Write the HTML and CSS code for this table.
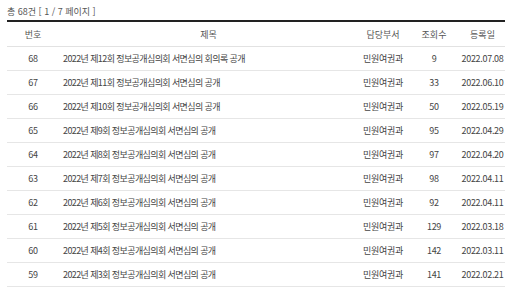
FILE: index.html
```html
<!DOCTYPE html>
<html lang="ko">
<head>
<meta charset="utf-8">
<link rel="stylesheet" href="styles.css">
</head>
<body>
<div class="board">
  <div class="count">총 68건 [ 1 / 7 페이지 ]</div>
  <table class="list">
    <colgroup>
      <col class="c-num"><col class="c-title"><col class="c-dept"><col class="c-hit"><col class="c-date">
    </colgroup>
    <thead>
      <tr><th>번호</th><th>제목</th><th>담당부서</th><th>조회수</th><th>등록일</th></tr>
    </thead>
    <tbody>
      <tr><td>68</td><td class="title">2022년 제12회 정보공개심의회 서면심의 회의록 공개</td><td>민원여권과</td><td>9</td><td>2022.07.08</td></tr>
      <tr><td>67</td><td class="title">2022년 제11회 정보공개심의회 서면심의 공개</td><td>민원여권과</td><td>33</td><td>2022.06.10</td></tr>
      <tr><td>66</td><td class="title">2022년 제10회 정보공개심의회 서면심의 공개</td><td>민원여권과</td><td>50</td><td>2022.05.19</td></tr>
      <tr><td>65</td><td class="title">2022년 제9회 정보공개심의회 서면심의 공개</td><td>민원여권과</td><td>95</td><td>2022.04.29</td></tr>
      <tr><td>64</td><td class="title">2022년 제8회 정보공개심의회 서면심의 공개</td><td>민원여권과</td><td>97</td><td>2022.04.20</td></tr>
      <tr><td>63</td><td class="title">2022년 제7회 정보공개심의회 서면심의 공개</td><td>민원여권과</td><td>98</td><td>2022.04.11</td></tr>
      <tr><td>62</td><td class="title">2022년 제6회 정보공개심의회 서면심의 공개</td><td>민원여권과</td><td>92</td><td>2022.04.11</td></tr>
      <tr><td>61</td><td class="title">2022년 제5회 정보공개심의회 서면심의 공개</td><td>민원여권과</td><td>129</td><td>2022.03.18</td></tr>
      <tr><td>60</td><td class="title">2022년 제4회 정보공개심의회 서면심의 공개</td><td>민원여권과</td><td>142</td><td>2022.03.11</td></tr>
      <tr><td>59</td><td class="title">2022년 제3회 정보공개심의회 서면심의 공개</td><td>민원여권과</td><td>141</td><td>2022.02.21</td></tr>
    </tbody>
  </table>
</div>
</body>
</html>
```
FILE: styles.css
```css
html, body {
  margin: 0;
  padding: 0;
  background: #fff;
}
body {
  font-family: "Noto Sans CJK KR", "Noto Sans", sans-serif;
  font-size: 9px;
  color: #444;
}
.board {
  padding: 0 7px;
}
.count {
  height: 20px;
  line-height: 24px;
  color: #555;
  letter-spacing: 0;
}
.list {
  width: 498px;
  border-collapse: collapse;
  table-layout: fixed;
  border-top: 2px solid #222;
}
.c-num { width: 52px; }
.c-dept { width: 50px; }
.c-hit { width: 52px; }
.c-date { width: 45px; }
.list th {
  height: 24px;
  font-weight: normal;
  color: #555;
  text-align: center;
  padding: 0;
  border-bottom: 1px solid #e2e2e2;
}
.list td {
  height: 23px;
  padding: 0;
  text-align: center;
  border-bottom: 1px solid #e6e6e6;
  white-space: nowrap;
  letter-spacing: -0.3px;
}
.list td.title {
  text-align: left;
  padding-left: 4px;
  letter-spacing: -0.6px;
}
```
